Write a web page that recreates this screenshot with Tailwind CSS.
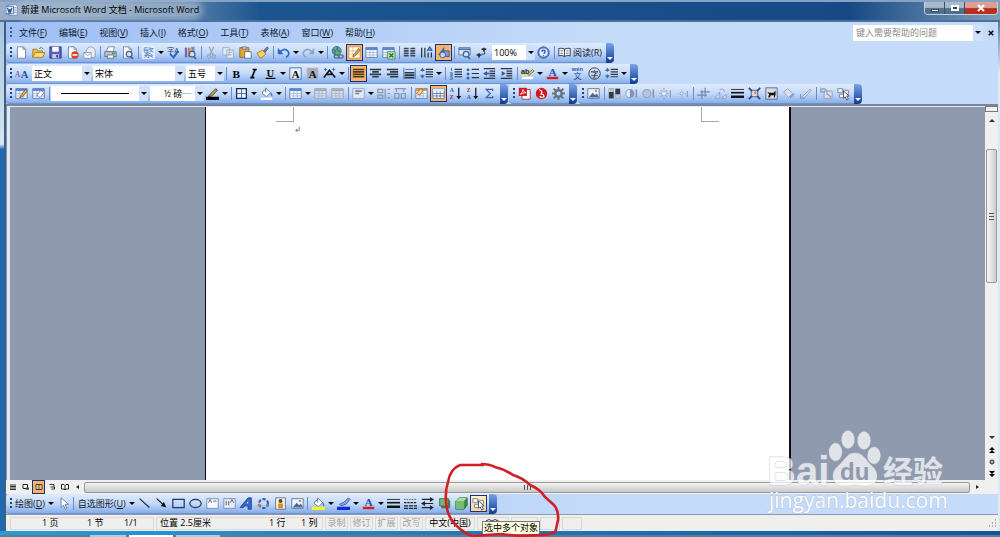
<!DOCTYPE html>
<html lang="zh-CN">
<head>
  <meta charset="UTF-8" />
  <meta name="viewport" content="width=device-width, initial-scale=1.0" />
  <title>新建 Microsoft Word 文档 - Microsoft Word</title>
  <script src="https://cdn.jsdelivr.net/npm/@tailwindcss/browser@4"></script>
</head>
<body class="relative flex h-screen flex-col overflow-hidden bg-[#1d5fa5] font-['Open_Sans','Noto_Sans_CJK_SC',sans-serif] text-[9px] leading-3 text-[#101828]">
  <!-- Title bar -->
  <header class="flex h-[22px] shrink-0 items-start border-t-2 border-b-2 border-t-[#86a3c2] border-b-[#4d6f9c] bg-[linear-gradient(90deg,#9aafc8,#5f82ab_18%,#1b5591_26%,#174a85_85%,#7f9cba)] pl-[6px]">
    <svg class="mt-[2px] h-3 w-3" viewBox="0 0 16 16" aria-hidden="true">
      <path d="M4 1h9l2 2v12H4z" fill="#fff" stroke="#5d7fb5" />
      <path d="M10 5h4M10 8h4M10 11h4" stroke="#4a6fb0" />
      <path d="M0 3h10v10H0z" fill="#e8f0fc" stroke="#2a579a" />
      <path d="M2 5l2 6 1-4 1 4 2-6" fill="none" stroke="#2a579a" stroke-width="1.6" />
    </svg>
    <h1 class="ml-[3px] mt-[2px] rounded-full bg-[#aebfd4]/60 text-black shadow-[0_0_6px_4px_#aebfd499]">新建 Microsoft Word 文档 - Microsoft Word</h1>
    <div class="ml-auto mr-[2px] flex h-[13px] overflow-hidden rounded-b border border-t-0 border-[#c3d0de]">
      <button aria-label="最小化" class="flex w-5 items-center justify-center border-r border-[#33506f] bg-linear-to-b from-[#a9bacb] from-45% to-[#526f8d] to-55%"><span class="mt-1 h-[3px] w-2 border border-[#34485f] bg-white"></span></button>
      <button aria-label="还原" class="flex w-5 items-center justify-center border-r border-[#33506f] bg-linear-to-b from-[#a9bacb] from-45% to-[#526f8d] to-55%"><span class="h-[6px] w-2 border-2 border-white bg-[#34485f]"></span></button>
      <button aria-label="关闭" class="flex w-8 items-center justify-center bg-linear-to-b from-[#dda094] from-45% to-[#b8301c] to-55%">
        <svg class="h-2 w-2" viewBox="0 0 8 8"><path d="M1 1l6 6M7 1L1 7" stroke="#fff" stroke-width="2" /></svg>
      </button>
    </div>
  </header>

  <div class="flex min-h-0 flex-1">
    <div class="w-[6px] shrink-0 border-r-2 border-[#3f6083] bg-linear-to-b from-[#a9c3dc] via-[#d5e6f3] via-24% to-[#1f69b0] to-25%"></div>
    <div class="flex min-w-0 flex-1 flex-col bg-linear-to-r from-[#9ebef5] to-[#c4dbf9] to-60%">
      <!-- Menu bar -->
      <div class="flex h-[21px] shrink-0 items-center pl-[4px] pr-[2px]">
        <span class="h-3 w-[2px] bg-[repeating-linear-gradient(#3c5a96_0_2px,transparent_2px_4px)]"></span>
        <nav id="menu" class="ml-[7px] flex gap-3"></nav>
        <div class="ml-auto flex h-4 bg-white">
          <input type="text" aria-label="帮助" placeholder="键入需要帮助的问题" class="w-[120px] px-[3px] outline-none placeholder:text-[#8a8a8a]" />
          <button aria-label="展开" class="flex w-[10px] items-center justify-center bg-[#cfe0fa]"><span class="border-x-3 border-t-3 border-x-transparent border-t-black"></span></button>
        </div>
        <button aria-label="关闭文档" class="ml-[3px] flex w-[10px] justify-center">
          <svg class="h-[6px] w-[6px]" viewBox="0 0 8 8"><path d="M1 1l6 6M7 1L1 7" stroke="#000" stroke-width="2" /></svg>
        </button>
      </div>
      <!-- Toolbars -->
      <div id="standard" role="toolbar" class="flex h-5 shrink-0"></div>
      <div id="format" role="toolbar" class="mt-px flex h-5 shrink-0"></div>
      <div class="flex h-5 shrink-0 gap-px">
        <div id="borders" role="toolbar" class="flex"></div>
        <div id="pdf" role="toolbar" class="flex"></div>
        <div id="picture" role="toolbar" class="flex"></div>
      </div>

      <!-- Document -->
      <div class="flex min-h-0 flex-1 border-t-2 border-[#7b8797] bg-[#dce9f8]">
        <div class="w-[4px] shrink-0 border-l border-[#8592a5]"></div>
        <main class="mt-px flex min-w-0 flex-1 justify-center bg-[#8f9aae]">
          <div class="flex w-[586px] justify-between border-l border-r-2 border-[#0b0d12] bg-white px-[70px]">
            <div class="flex">
              <span class="h-[15px] w-[18px] border-b border-r border-[#a9a9a9]"></span>
              <svg class="mt-[19px] h-[7px] w-[7px]" viewBox="0 0 8 8" aria-hidden="true"><path d="M6 1v4H2M4 3L2 5l2 2" fill="none" stroke="#777" /></svg>
            </div>
            <span class="h-[15px] w-[18px] border-b border-l border-[#a9a9a9]"></span>
          </div>
        </main>
        <div class="flex w-[13px] shrink-0 flex-col items-center bg-[#f0f0f0]">
          <span class="h-[6px] w-full border border-[#777] bg-[#f2f2f2]"></span>
          <button aria-label="向上滚动" class="flex h-4 w-full items-center justify-center"><span class="border-x-3 border-b-3 border-x-transparent border-b-[#333]"></span></button>
          <span class="h-[21px]"></span>
          <span class="flex h-[134px] w-[11px] items-center justify-center rounded-xs border border-[#989898] bg-linear-to-r from-[#f6f6f6] to-[#cfcfcf]"><span class="h-[7px] w-[5px] bg-[repeating-linear-gradient(#555_0_1px,transparent_1px_3px)]"></span></span>
          <div class="mt-auto flex flex-col items-center gap-[2px] pb-px">
            <button aria-label="向下滚动" class="flex h-[11px] items-center"><span class="border-x-3 border-t-3 border-x-transparent border-t-[#333]"></span></button>
            <button aria-label="前一页" class="h-[10px]"><svg class="h-[6px] w-[6px]" viewBox="0 0 6 6"><path d="M3 0l3 3H0zM3 3l3 3H0z" /></svg></button>
            <button aria-label="选择浏览对象" class="h-[10px]"><svg class="h-[6px] w-[6px]" viewBox="0 0 6 6"><circle cx="3" cy="3" r="2" fill="#bbb" stroke="#222" /></svg></button>
            <button aria-label="下一页" class="h-[10px]"><svg class="h-[6px] w-[6px]" viewBox="0 0 6 6"><path d="M3 3l3-3H0zM3 6l3-3H0z" /></svg></button>
          </div>
        </div>
      </div>

      <!-- View buttons and horizontal scroll bar -->
      <div class="flex h-[14px] shrink-0 items-center bg-[#f0f0f0] pr-[13px]">
        <div id="views" class="flex h-full"></div>
        <button aria-label="向左滚动" class="flex w-[13px] justify-center"><span class="border-y-2 border-r-3 border-y-transparent border-r-[#222]"></span></button>
        <span class="flex h-[11px] flex-1 items-center justify-center rounded-xs border border-[#989898] bg-linear-to-b from-[#f4f4f4] to-[#c8c8c8]"><span class="h-[5px] w-[7px] bg-[repeating-linear-gradient(90deg,#555_0_1px,transparent_1px_3px)]"></span></span>
        <button aria-label="向右滚动" class="flex w-[15px] justify-center"><span class="border-y-2 border-l-3 border-y-transparent border-l-[#222]"></span></button>
      </div>

      <div id="drawing" role="toolbar" class="flex h-5 shrink-0"></div>

      <!-- Status bar -->
      <footer class="flex h-[17px] shrink-0 items-center gap-[2px] border-t border-[#8f9aae] bg-[#efefee] pl-[4px] text-black">
        <div class="flex h-[13px] w-[144px] items-center border border-[#dadada] pl-[31px]"><span class="w-[45px]">1 页</span><span class="w-[37px]">1 节</span><span>1/1</span></div>
        <div class="flex h-[13px] w-[167px] items-center border border-[#dadada] pl-[3px]"><span class="w-[109px]">位置 2.5厘米</span><span class="w-8">1 行</span><span>1 列</span></div>
        <div class="flex h-[13px] w-[23px] items-center justify-center border border-[#dadada] text-[#a3a3a3]">录制</div>
        <div class="flex h-[13px] w-[23px] items-center justify-center border border-[#dadada] text-[#a3a3a3]">修订</div>
        <div class="flex h-[13px] w-[23px] items-center justify-center border border-[#dadada] text-[#a3a3a3]">扩展</div>
        <div class="flex h-[13px] w-[23px] items-center justify-center border border-[#dadada] text-[#a3a3a3]">改写</div>
        <div class="flex h-[13px] w-[50px] items-center justify-center border border-[#dadada]">中文(中国)</div>
        <div class="flex h-[13px] w-8 items-start justify-center border border-[#dadada]">
          <svg class="h-3 w-4" viewBox="0 0 16 12" aria-hidden="true"><path d="M1 3q3-3 6 0v6q-3-3-6 0zM7 3q3-3 6 0v6q-3-3-6 0z" fill="#fff" stroke="#333" /><path d="M9 4l4 4M13 2l-4 6" stroke="#c22" stroke-width="1.5" /></svg>
        </div>
        <div class="h-[13px] w-[27px] border border-[#dadada]"></div>
        <div class="h-[13px] w-5 border border-[#dadada]"></div>
        <div class="h-[13px] w-5 border border-[#dadada]"></div>
        <svg class="ml-auto h-3 w-3" viewBox="0 0 12 12" aria-hidden="true"><path d="M9 3h1M6 6h1M9 6h1M3 9h1M6 9h1M9 9h1" stroke="#999" stroke-width="1.5" /></svg>
      </footer>
    </div>
    <div class="w-[2px] shrink-0 bg-linear-to-b from-[#5d7fa4] to-[#d8ebf8] to-10%"></div>
  </div>
  <div class="h-1 shrink-0 bg-linear-to-r from-[#2b9cd8] to-[#14549c]"></div>
  <div class="flex h-[2px] shrink-0 gap-[3px] bg-[#5d7c92] pl-[90px]"><span class="w-9 bg-[#b9cbd6]"></span><span class="w-11 bg-white"></span><span class="w-11 bg-[#b9cbd6]"></span></div>

  <!-- Tooltip and pen mark over the drawing toolbar -->
  <div role="tooltip" class="absolute bottom-[2px] left-[482px] border border-[#777] bg-[#ffffe1] px-px text-black">选中多个对象</div>
  <svg class="pointer-events-none absolute bottom-0 left-[440px] h-[77px] w-[124px]" viewBox="440 460 124 77" aria-hidden="true">
    <path d="M484 465L460 465Q450 469 448 482Q445 492 446 500Q446 511 451 519Q459 531 472 536L500 534L520 536L540 535Q556 535 556 529L558 520Q559 511 554 505L545 497Q540 489 530 485Q523 478 513 475Q504 469 495 467Q489 464 481 464" fill="none" stroke="#cf2026" stroke-width="2.6" stroke-linejoin="round" />
  </svg>

  <!-- Watermark -->
  <svg class="pointer-events-none absolute bottom-[20px] right-[50px] h-[92px] w-[186px]" viewBox="764 425 186 92">
    <g fill="#fff" fill-opacity=".72" stroke="#a9b4c6" stroke-opacity=".5" stroke-width="1" paint-order="stroke">
      <ellipse cx="835.500" cy="452" rx="6.500" ry="9" />
      <ellipse cx="848" cy="439.500" rx="6.500" ry="9" />
      <ellipse cx="864" cy="440.500" rx="6.500" ry="9" />
      <ellipse cx="874" cy="455.500" rx="6.500" ry="8.500" />
      <path d="M855 453c7 0 10 5 14 10 4 4 8 7 8 13 0 7-5 10-11 10-4 0-7-1-11-1s-8 1-12 1c-6 0-10-4-10-10 0-7 5-9 9-14 4-4 6-9 13-9z" />
      <text x="767" y="485" font-family="Liberation Sans" font-weight="bold" font-size="40">Bai</text>
      <text x="883" y="482" font-family="Noto Sans CJK SC" font-weight="bold" font-size="30">经验</text>
      <text x="769" y="508" font-family="Open Sans" font-size="21" fill-opacity=".95">jingyan.baidu.com</text>
    </g>
    <text x="840" y="480" font-family="Liberation Sans" font-weight="bold" font-size="24" fill="#8f9aae">du</text>
  </svg>

  <script>
    const page = '<path d="M3 1h7l3 3v11H3z" fill="#fff" stroke="#68789b"/><path d="M10 1v3h3" fill="none" stroke="#68789b"/>';
    const grid = '<path d="M1 2h14v12H1z" fill="#fff" stroke="#4b6cae"/><path d="M1 2h14v3H1z" fill="#5b86d0"/><path d="M1 8h14M1 11h14M6 5v9M10 5v9" stroke="#9bb2d8"/>';
    const grayGrid = '<path d="M1 2h14v12H1z" fill="#dbe3ef" stroke="#929fb5"/><path d="M1 3h14v2H1z" fill="#929fb5"/><path d="M1 8h14M1 11h14M6 2v12M10 2v12" stroke="#a5b1c5"/>';
    const pencil = '<path d="M7 11l6-8 2 2-6 7-3 1z" fill="#f0b63c" stroke="#7c5318"/>';
    const lens = '<circle cx="10" cy="10" r="3.500" fill="#c7e5f7" stroke="#44618c" stroke-width="1.500"/><path d="M12 13l3 3" stroke="#44618c" stroke-width="2"/>';
    const bucket = '<path d="M3 6l5-4 5 5-5 5-5-4z" fill="#fff" stroke="#4b6693"/><path d="M7 1v6" stroke="#4b6693"/><path d="M13 6q3 2 2 6-2-1-2-6" fill="#3a78cf"/>';
    const photo = '<path d="M1 2h14v12H1z" fill="#eaf4ff" stroke="#56698e"/><path d="M2 13l5-6 3 3 2-2 3 5z" fill="#49699e"/><circle cx="11" cy="5" r="1.500" fill="#f08b3c"/>';
    const cursor = '<path d="M5 1v12l3-3 2 5 2-1-2-5h4z" fill="#fff" stroke="#5c6f92"/>';
    const rows = '<path d="M7 3h9M7 6h9M7 9h9M7 12h9" stroke="#2b3648" stroke-width="1.500"/>';
    const spacing = rows + '<path d="M3 2v4M3 9v4" stroke="#3b68b0"/><path d="M0 5l3-4 3 4zM0 10l3 4 3-4z" fill="#3b68b0"/>';
    const letter = (c, x, y, size, fill) => `<text x="${x}" y="${y}" font-size="${size}" font-weight="bold" font-family="Liberation Serif" fill="${fill}">${c}</text>`;

    const icons = {
      new: page,
      open: '<path d="M1 14V4h5l1 2h6v3" fill="#f3c34d" stroke="#a7701c"/><path d="M1 14l3-6h12l-3 6z" fill="#ffdc76" stroke="#a7701c"/><path d="M9 3q3-3 5 1" fill="none" stroke="#35599a"/>',
      save: '<path d="M1 1h14v14H1z" fill="#5c5fbb" stroke="#30358b"/><path d="M4 1h8v6H4z" fill="#fff"/><path d="M4 10h8v5H4z" fill="#c9cdea"/><path d="M9 11h2v3H9z" fill="#30358b"/>',
      permission: page + '<circle cx="11" cy="11" r="4.500" fill="#d84327"/><path d="M8 11h6" stroke="#fff" stroke-width="2"/>',
      mail: '<path d="M4 6q1-5 6-5 5 1 5 7v6H4z" fill="#e8ebf1" stroke="#8792a7"/><path d="M1 8h9v7H1z" fill="#fff" stroke="#8792a7"/><path d="M1 8l5 4 4-4" fill="none" stroke="#8792a7"/>',
      print: '<path d="M5 1h8l-2 6H3z" fill="#fff" stroke="#6d7b93"/><path d="M1 7h14v6H1z" fill="#c3c8d3" stroke="#56627a"/><path d="M4 11h8v4H4z" fill="#fff" stroke="#56627a"/><path d="M10 9h4" stroke="#3aa745" stroke-width="2"/>',
      preview: page + lens,
      spellGray: '<path d="M0 0h16v16H0z" fill="#e3effe"/><text x="1" y="13" font-size="14" fill="#5f86c4">繁</text>',
      spell: '<text x="0" y="9" font-size="9" fill="#223e73">字A</text><path d="M4 10l4 4 6-8" fill="none" stroke="#2e63bf" stroke-width="2.500"/>',
      research: '<path d="M1 2h3v12H1z" fill="#7b63b7"/><path d="M5 2h3v12H5z" fill="#d37a45"/><path d="M9 1h4v8H9z" fill="#6c91c8"/>' + lens,
      cut: '<path d="M5 1l5 10M11 1L6 11" stroke="#9aa6ba" stroke-width="1.500"/><circle cx="5" cy="13" r="2" fill="none" stroke="#9aa6ba" stroke-width="1.500"/><circle cx="11" cy="13" r="2" fill="none" stroke="#9aa6ba" stroke-width="1.500"/>',
      copy: '<path d="M1 2h8v9H1zM6 5h8v10H6z" fill="#e4eaf4" stroke="#9aa6ba"/><path d="M8 8h4M8 11h4" stroke="#9aa6ba"/>',
      paste: '<path d="M1 2h11v12H1z" fill="#e5a632" stroke="#8d5b16"/><path d="M4 1h5v3H4z" fill="#ccd3df" stroke="#65718a"/><path d="M7 7h8v8H7z" fill="#fff" stroke="#50618c"/>',
      painter: '<path d="M9 6l5-5 1 2-4 5z" fill="#6e7fae" stroke="#47557d"/><path d="M1 9l7-4 4 5-6 5z" fill="#f6d35b" stroke="#9b7518"/>',
      undo: '<path d="M4 7q5-5 9-1t-2 8" fill="none" stroke="#2d65c4" stroke-width="2"/><path d="M1 2v8h7z" fill="#2d65c4"/>',
      redo: '<path d="M12 7Q7 2 3 6t2 8" fill="none" stroke="#93a5c4" stroke-width="2"/><path d="M15 2v8H8z" fill="#93a5c4"/>',
      link: '<circle cx="7" cy="6" r="5.500" fill="#66b06c" stroke="#2f6a8b"/><path d="M3 4q3 2 1 6M8 1q-2 4 3 6" stroke="#3a71bd" stroke-width="2" fill="none"/><ellipse cx="7" cy="13" rx="3" ry="2" fill="none" stroke="#5d6b86" stroke-width="1.500"/><ellipse cx="12" cy="13" rx="3" ry="2" fill="none" stroke="#5d6b86" stroke-width="1.500"/>',
      tables: '<path d="M1 1h14v14H1z" fill="#fff" stroke="#c08a3c"/><path d="M1 6h14M1 10h14M6 1v14" stroke="#e2b77a"/>' + pencil,
      table: grid,
      excel: grid + '<path d="M7 7h9v9H7z" fill="#dff3dd" stroke="#2c7e35"/><path d="M9 9l5 5M14 9l-5 5" stroke="#2c7e35" stroke-width="2"/>',
      columns: '<path d="M1 3h6M1 6h6M1 9h6M1 12h6M9 3h6M9 6h6M9 9h6M9 12h6" stroke="#3d4654" stroke-width="2"/>',
      direction: '<path d="M2 2v12M6 2v12M10 8v6M14 8v6" stroke="#2b3648" stroke-width="1.500"/><path d="M9 6l3-5 3 5M10 5h4" fill="none" stroke="#2c5cab" stroke-width="1.500"/>',
      draw: '<path d="M8 6h7v7H8z" fill="#7d9bd9" stroke="#344f8c"/><path d="M1 11L9 1v10z" fill="#4169bb"/><circle cx="7" cy="11" r="3.500" fill="#c7d4ef" stroke="#344f8c"/>',
      map: '<path d="M1 2h14v9H1z" fill="#d7e9fb" stroke="#4b6cae"/><path d="M1 4h14" stroke="#4b6cae" stroke-width="2"/>' + lens,
      marks: '<path d="M11 2v5M8 4h6M5 9v5M2 11h6" stroke="#1f2937" stroke-width="2"/><path d="M12 7v3H8" fill="none" stroke="#1f2937"/>',
      help: '<circle cx="8" cy="8" r="7" fill="#4f83d8" stroke="#2d559b"/><circle cx="8" cy="8" r="5" fill="#e7f0fd"/><path d="M6 7q0-2 2-2t2 2-2 2M8 11v1" fill="none" stroke="#234b95" stroke-width="1.600"/>',
      book: '<path d="M1 3q4-1 7 1 3-2 7-1v9q-4-1-7 1-3-2-7-1zM8 4v9" fill="#fff" stroke="#3d4d6b" stroke-width="1.300"/><path d="M3 6h3M3 9h3M10 6h3M10 9h3" stroke="#3d4d6b"/>',
      styles: letter('A', 0, 12, 9, '#8d5fb0') + letter('A', 7, 14, 13, '#28529f'),
      bold: letter('B', 3, 13, 14, '#000'),
      italic: '<path d="M7 3h5M4 13h5M10 3l-4 10" stroke="#000" stroke-width="2"/>',
      underline: letter('U', 3, 12, 13, '#000') + '<path d="M2 14h12" stroke="#000" stroke-width="1.500"/>',
      charBorder: '<path d="M1 1h14v14H1z" fill="#e8f1ff" stroke="#3e5d94"/>' + letter('A', 3, 13, 14, '#111'),
      charShade: '<path d="M1 1h14v14H1z" fill="#a9afb9"/>' + letter('A', 3, 13, 14, '#111'),
      charScale: '<path d="M1 3h4M11 3h4M3 1v4M13 1v4" stroke="#355fa8" fill="none"/><path d="M1 13l7-9 7 9M5 9h6" fill="none" stroke="#111" stroke-width="2"/>',
      justify: '<path d="M1 3h14M1 6h14M1 9h14M1 12h14" stroke="#4c3721" stroke-width="2"/>',
      center: '<path d="M1 3h14M4 6h8M1 9h14M4 12h8" stroke="#2b3648" stroke-width="2"/>',
      right: '<path d="M1 3h14M5 6h10M1 9h14M5 12h10" stroke="#2b3648" stroke-width="2"/>',
      distribute: '<path d="M1 1v14M15 1v14M3 3h10" stroke="#2c5cab"/><path d="M2 7h12M2 10h12M2 13h12" stroke="#2b3648" stroke-width="2"/>',
      spacing,
      numbers: rows + '<path d="M3 1v4M1 7h3v2H2v1h3M1 12h3v3H1" stroke="#2c5cab" fill="none"/>',
      bullets: '<path d="M7 3h9M7 8h9M7 13h9" stroke="#2b3648" stroke-width="1.500"/><path d="M1 2h3v3H1zM1 7h3v3H1zM1 12h3v3H1z" fill="#2c5cab"/>',
      outdent: '<path d="M1 2h14M8 5h7M8 8h7M8 11h7M1 14h14" stroke="#2b3648" stroke-width="1.600"/><path d="M5 5v6L0 8z" fill="#2c5cab"/><path d="M4 8h4" stroke="#2c5cab" stroke-width="2"/>',
      indent: '<path d="M1 2h14M8 5h7M8 8h7M8 11h7M1 14h14" stroke="#2b3648" stroke-width="1.600"/><path d="M2 5v6l5-3z" fill="#2c5cab"/>',
      highlight: '<text x="0" y="8" font-size="9" font-weight="bold" font-family="Liberation Sans" fill="#222">ab</text><path d="M8 9l6-6 2 2-6 5z" fill="#f1ce55" stroke="#6e6128"/><path d="M1 12h14v3H1z" fill="#fff"/><path d="M1 9h7v2H1z" fill="#eee34d"/>',
      fontColor: letter('A', 3, 11, 14, '#28529f') + '<path d="M1 12h14v3H1z" fill="#d91c24"/>',
      pinyin: '<text x="1" y="5" font-size="7" font-weight="bold" font-family="Liberation Sans" fill="#2c5cab">wén</text><text x="3" y="15" font-size="10" font-family="Noto Sans CJK SC" fill="#1e3e7c">文</text>',
      circled: '<circle cx="8" cy="8" r="7" fill="none" stroke="#222"/><text x="3" y="12" font-size="10" fill="#111">字</text>',
      drawTable: grid + pencil,
      eraser: grid + '<path d="M6 10l5-6 4 3-5 6z" fill="#fff" stroke="#68789b"/>',
      pen: '<path d="M4 10l8-8 2 2-7 7-4 1z" fill="#d9a23f" stroke="#23272e"/><path d="M0 12h16v4H0z" fill="#000"/>',
      outside: '<path d="M2 2h12v12H2z" fill="#eaf3ff" stroke="#13285a" stroke-width="1.500"/><path d="M8 2v12M2 8h12" stroke="#3c588f"/>',
      shade: bucket + '<path d="M1 13h14v3H1z" fill="#fff"/>',
      grayGrid,
      split: '<path d="M1 2h14v12H1z" fill="#e5ebf5" stroke="#929fb5"/><path d="M4 5h8M4 8h5" stroke="#7483a0" stroke-width="2"/>',
      distRows: '<path d="M1 3h6v4H1zM1 10h6v4H1zM10 2v13M13 3h3M13 8h3M13 13h3" fill="none" stroke="#8997b0" stroke-width="1.500"/>',
      distCols: '<path d="M1 8h5v6H1zM9 8h5v6H9zM1 2h14M3 2v4M12 2v4" fill="none" stroke="#8997b0" stroke-width="1.500"/>',
      autoFormat: grid.replace('#5b86d0', '#dd9352') + '<path d="M2 8l5-6 3 2-4 6z" fill="#ffe06d" stroke="#9c5428"/>',
      gridOn: grid.replace('#5b86d0', '#dfe9fa').replace('#9bb2d8', '#4b6cae'),
      sortAsc: letter('A', 1, 6, 7, '#2c5cab') + letter('Z', 1, 15, 7, '#a42c3c') + '<path d="M12 1v12" stroke="#111" stroke-width="1.500"/><path d="M9 11h6l-3 4z" fill="#111"/>',
      sortDesc: letter('Z', 1, 6, 7, '#a42c3c') + letter('A', 1, 15, 7, '#2c5cab') + '<path d="M12 1v12" stroke="#111" stroke-width="1.500"/><path d="M9 11h6l-3 4z" fill="#111"/>',
      sum: '<path d="M12 5V3H4l5 5-5 5h8v-2" fill="none" stroke="#3f619d" stroke-width="1.500"/>',
      pdf: '<path d="M5 3h10v12H5z" fill="#fff" stroke="#b11e24"/><path d="M1 1h10v10H1z" fill="#d3171e"/><path d="M3 9q3-3 3-6 1 4 4 4-4 0-7 2" fill="none" stroke="#fff"/>',
      foxit: '<circle cx="8" cy="8" r="7" fill="#d3171e"/><path d="M5 3q6 3 2 6 4-1 4 3-4 2-5-1" fill="none" stroke="#fff" stroke-width="1.500"/>',
      gear: '<circle cx="8" cy="8" r="4" fill="none" stroke="#68717e" stroke-width="3"/><path d="M8 0v3M8 13v3M0 8h3M13 8h3M2 2l3 3M11 11l3 3M14 2l-3 3M5 11l-3 3" stroke="#68717e" stroke-width="2.500"/>',
      photo,
      colorMode: '<path d="M1 2h6v12H1z" fill="#353b43"/><path d="M9 2h6v12H9z" fill="#353b43"/><path d="M1 2h6v4H1zM9 9h6v5H9z" fill="#bfc5cc"/>',
      contrastUp: '<circle cx="6" cy="8" r="5" fill="#e3ebf6" stroke="#8394b0"/><path d="M6 3a5 5 0 010 10z" fill="#8394b0"/><path d="M14 3v10" stroke="#8394b0" stroke-width="2"/>',
      contrastDown: '<circle cx="6" cy="8" r="5" fill="#b8c5da" stroke="#8394b0"/><path d="M14 3v10" stroke="#8394b0" stroke-width="2"/>',
      brightUp: '<circle cx="6" cy="8" r="3" fill="#e7eefb" stroke="#8fa0bd"/><path d="M6 1v2M6 13v2M0 8h2M10 8h2M2 4l1 1M10 4L9 5M2 12l1-1M10 12l-1-1M14 4v9" stroke="#8fa0bd" stroke-width="1.500"/>',
      brightDown: '<circle cx="7" cy="8" r="2" fill="#e7eefb" stroke="#8fa0bd"/><path d="M7 3v1M7 12v1M2 8h1M11 8h1M14 5v7" stroke="#8fa0bd" stroke-width="1.500"/>',
      crop: '<path d="M6 4v11M0 10h12M10 1v11M4 6h12" fill="none" stroke="#7588a9" stroke-width="1.500"/>',
      rotate: '<path d="M1 14h6V6zM9 14h6V9z" fill="#cfdbec" stroke="#8b9ab5"/><path d="M7 3q5-2 6 3" fill="none" stroke="#8b9ab5"/>',
      lineStyle: '<path d="M0 3h16" stroke="#111"/><path d="M0 7h16" stroke="#111" stroke-width="2"/><path d="M0 12h16" stroke="#111" stroke-width="3"/>',
      compress: '<path d="M4 4h8v8H4z" fill="#dfd3df" stroke="#3b5487"/><path d="M1 1l4 4M15 1l-4 4M1 15l4-4M15 15l-4-4" stroke="#294783" stroke-width="2"/><circle cx="9" cy="7" r="1.500" fill="#e68543"/>',
      wrap: '<path d="M1 1h14v14H1z" fill="#d7dde7" stroke="#4c5a73"/><path d="M3 6l3 1h5l2-3v5l-1 4h-1v-3H7l-1 3H4l1-4z" fill="#111"/>',
      objectGray: '<path d="M2 6l5-4 6 6-5 5z" fill="#d9e1ed" stroke="#8a99b3"/><path d="M10 13l5-5" stroke="#8a99b3" stroke-width="2"/>',
      transparent: '<path d="M4 12l9-9 2 1-8 9z" fill="#d9e1ed" stroke="#8a99b3"/><path d="M2 9v5h5" fill="none" stroke="#8a99b3" stroke-width="1.500"/>',
      reset: '<path d="M5 5h10v9H5z" fill="#d9e1ed" stroke="#8a99b3"/><path d="M8 8l6 5M2 3q5-3 7 4M1 1v5h5" fill="none" stroke="#8a99b3" stroke-width="1.500"/>',
      multi: '<path d="M1 2h6v5H1zM8 4h6v5H8zM3 9h5v4H3z" fill="#eff3fa" stroke="#6f7b90"/><path d="M8 5v9l2-2 2 4 2-1-2-4h3z" fill="#fff" stroke="#39445c"/>',
      cursor,
      line: '<path d="M2 2l12 11" stroke="#1c2e55" stroke-width="1.500"/>',
      arrow: '<path d="M2 2l9 8" stroke="#111" stroke-width="1.500"/><path d="M14 13l-7-2 4-5z" fill="#111"/>',
      rect: '<path d="M1 3h14v10H1z" fill="none" stroke="#22345e" stroke-width="1.500"/>',
      oval: '<ellipse cx="8" cy="8" rx="7" ry="5" fill="none" stroke="#22345e" stroke-width="1.500"/>',
      textBox: '<path d="M1 2h14v12H1z" fill="#f4f7fc" stroke="#7385a5"/><path d="M3 7l2-4 2 4M9 5h4" fill="none" stroke="#3c4b68"/>',
      textBoxV: '<path d="M1 2h14v12H1z" fill="#e6ebf4" stroke="#7385a5"/><path d="M9 7l2-4 2 4M4 5v5M7 5v5" fill="none" stroke="#3c4b68"/>',
      wordArt: '<path d="M0 13L10 1h4v14h-4v-4H6l-2 2z" fill="#3669c4" stroke="#1d4187"/><path d="M8 8l2-3v3z" fill="#dce9fd"/>',
      diagram: '<circle cx="8" cy="8" r="5.500" fill="none" stroke="#365c9f" stroke-width="2.500" stroke-dasharray="4 2"/><circle cx="3" cy="10" r="2" fill="#da7548"/><circle cx="13" cy="10" r="2" fill="#5b86d0"/>',
      clip: '<path d="M2 1h12v14H2z" fill="#fbf3df" stroke="#56698e"/><circle cx="8" cy="5" r="2.500" fill="#6a4322"/><path d="M5 8h6v6H5z" fill="#d98c2b"/>',
      fill: bucket + '<path d="M0 12h16v4H0z" fill="#f5f51c"/>',
      lineColor: '<path d="M3 9l6-3 5-5 2 2-5 6-6 2z" fill="#86a5d8" stroke="#3b5a97"/><path d="M0 12h16v4H0z" fill="#0c28e8"/>',
      dash: '<path d="M0 3h16" stroke="#222" stroke-dasharray="1"/><path d="M0 7h16" stroke="#222" stroke-dasharray="3 1" stroke-width="1.500"/><path d="M0 11h16M0 14h16" stroke="#222" stroke-dasharray="5 1" stroke-width="1.500"/>',
      arrows: '<path d="M1 3h11M4 8h11M1 13h11" stroke="#222" stroke-width="1.500"/><path d="M11 0l5 3-5 3zM5 5L0 8l5 3zM11 10l5 3-5 3z" fill="#222"/>',
      shadow: '<path d="M4 4h11v10H4z" fill="#59677a"/><path d="M2 2h11v9H2z" fill="#72b873" stroke="#2f7440"/>',
      cube: '<path d="M1 5l4-4h10v9l-4 5H1z" fill="#3f8c4b" stroke="#235e32"/><path d="M1 5h10v10H1z" fill="#75bd72"/><path d="M1 5l4-4h10l-4 4z" fill="#a8dda0"/>',
      normalView: '<path d="M2 4h12M2 7h12M2 10h12M2 13h12" stroke="#333" stroke-width="2"/>',
      webView: '<path d="M2 3h9v8H2z" fill="#fff" stroke="#222" stroke-width="2"/><circle cx="11" cy="11" r="3" fill="#444"/>',
      printView: '<path d="M2 3h12v10H2z" fill="#fff0cf" stroke="#4b3520" stroke-width="2"/><path d="M5 6h6M5 10h6" stroke="#4b3520" stroke-width="2"/>',
      outline: '<path d="M3 3h9v5H5M7 12h6V8" fill="none" stroke="#333" stroke-width="2"/>',
      readView: '<path d="M1 3h5l2 2 2-2h5v9h-5l-2 2-2-2H1zM8 5v8" fill="#fff" stroke="#222" stroke-width="2"/>'
    };

    const arrowDown = '<span class="border-x-3 border-t-3 border-x-transparent border-t-black"></span>';

    function icon(name) {
      return `<svg class="h-[13px] w-[13px] shrink-0 overflow-visible" viewBox="0 0 16 16">${icons[name]}</svg>`;
    }

    // "|" separator, "v" drop-down arrow, "*" pressed, "~" hovered
    function item(name) {
      if (name === "|") return `<span class="flex w-1 shrink-0 items-center justify-center"><span class="h-[13px] w-px bg-[#6a8ccb]"></span></span>`;
      if (name === "v") return `<button aria-label="更多" class="flex w-2 shrink-0 items-center justify-center">${arrowDown}</button>`;
      if (name[0] === "<") return name;
      if (name[0] === "*") return `<button aria-label="${name.slice(1)}" aria-pressed="true" class="my-px flex w-[17px] shrink-0 items-center justify-center border border-[#1d2f7a] bg-[#f9b565]">${icon(name.slice(1))}</button>`;
      if (name[0] === "~") return `<button aria-label="${name.slice(1)}" class="my-px flex w-[17px] shrink-0 items-center justify-center border border-[#1d2f7a] bg-linear-to-b from-[#fff0cf] to-[#fcd391]">${icon(name.slice(1))}</button>`;
      return `<button aria-label="${name}" class="flex w-[17px] shrink-0 items-center justify-center">${icon(name)}</button>`;
    }

    function combo(label, value, width, pad = "pl-[2px]") {
      return `<label class="my-[2px] ml-[2px] flex ${width} shrink-0 bg-white"><select aria-label="${label}" class="min-w-0 flex-1 appearance-none text-black outline-none ${pad}"><option>${value}</option></select><span class="flex w-[9px] items-center justify-center bg-[#cfe0fa]">${arrowDown}</span></label>`;
    }

    function toolbar(id, items) {
      document.getElementById(id).innerHTML = `
        <div class="flex rounded-l-sm border-b border-[#6d92d0] bg-linear-to-b from-[#dfebfe] via-[#c3d9f9] to-[#86aeea] pl-[4px] pr-[2px]">
          <span class="mr-px h-3 w-[2px] shrink-0 self-center bg-[repeating-linear-gradient(#27417a_0_2px,transparent_2px_4px)]"></span>
          ${items.map(item).join("")}
        </div>
        <button aria-label="工具栏选项" class="flex w-2 shrink-0 items-end justify-center rounded-r-sm bg-linear-to-b from-[#7ba4e6] to-[#0d3a94] pb-[3px]"><span class="border-x-3 border-t-3 border-x-transparent border-t-white"></span></button>`;
    }

    const menus = [["文件", "F"], ["编辑", "E"], ["视图", "V"], ["插入", "I"], ["格式", "O"], ["工具", "T"], ["表格", "A"], ["窗口", "W"], ["帮助", "H"]];
    document.getElementById("menu").innerHTML = menus.map(([text, key]) => `<button>${text}(<u>${key}</u>)</button>`).join("");

    toolbar("standard", ["new", "open", "save", "permission", "mail", "|", "print", "preview", "|", "spellGray", "v", "spell", "research", "|",
      "cut", "copy", "paste", "painter", "|", "undo", "v", "redo", "v", "|", "link", "*tables", "table", "excel", "|", "columns", "direction", "*draw", "|",
      "map", "marks", combo("显示比例", "100%", "w-[43px]"), "help", "|",
      `<button class="flex w-12 items-center gap-[2px] pl-[2px]">${icon("book")}<span class="whitespace-nowrap">阅读(R)</span></button>`]);

    toolbar("format", ["styles", combo("样式", "正文", "w-[59px]"), combo("字体", "宋体", "w-[91px]"), combo("字号", "五号", "w-[38px]"), "|",
      "bold", "italic", "underline", "v", "charBorder", "charShade", "charScale", "v", "|", "*justify", "center", "right", "distribute", "spacing", "v", "|",
      "numbers", "bullets", "outdent", "indent", "|", "highlight", "v", "fontColor", "v", "pinyin", "circled", "spacing", "v"]);

    toolbar("borders", ["drawTable", "eraser", "|",
      `<button aria-label="线型" class="my-[2px] flex w-[97px] shrink-0 items-center bg-white"><span class="mx-[10px] h-px flex-1 bg-black"></span><span class="flex h-full w-[9px] items-center justify-center bg-[#cfe0fa]">${arrowDown}</span></button>`,
      combo("粗细", "½ 磅─", "w-[54px]", "pl-[14px]"), "pen", "v", "|", "outside", "v", "shade", "v", "|", "table", "v", "grayGrid", "grayGrid", "|",
      "split", "v", "distRows", "distCols", "|", "autoFormat", "*gridOn", "sortAsc", "sortDesc", "sum"]);
    toolbar("pdf", ["pdf", "foxit", "gear"]);
    toolbar("picture", ["photo", "|", "colorMode", "contrastUp", "contrastDown", "brightUp", "brightDown", "|",
      "crop", "rotate", "lineStyle", "compress", "wrap", "objectGray", "transparent", "|", "reset", "multi"]);

    toolbar("drawing", [`<button class="px-[2px] whitespace-nowrap">绘图(<u>D</u>)</button>`, "v", "cursor", "|",
      `<button class="px-[2px] whitespace-nowrap">自选图形(<u>U</u>)</button>`, "v", "line", "arrow", "rect", "oval", "textBox", "textBoxV", "wordArt", "diagram", "clip", "photo", "|",
      "fill", "v", "lineColor", "v", "fontColor", "v", "lineStyle", "dash", "arrows", "shadow", "cube", "~multi"]);

    document.getElementById("views").innerHTML = ["normalView", "webView", "*printView", "outline", "readView"].map(name => {
      const on = name[0] === "*";
      const key = on ? name.slice(1) : name;
      return `<button aria-label="${key}" class="flex w-[13px] items-center justify-center ${on ? "border border-[#1d2f7a] bg-[#f9b565]" : ""}"><svg class="h-2 w-2" viewBox="0 0 16 16">${icons[key]}</svg></button>`;
    }).join("");
  </script>
</body>
</html>
